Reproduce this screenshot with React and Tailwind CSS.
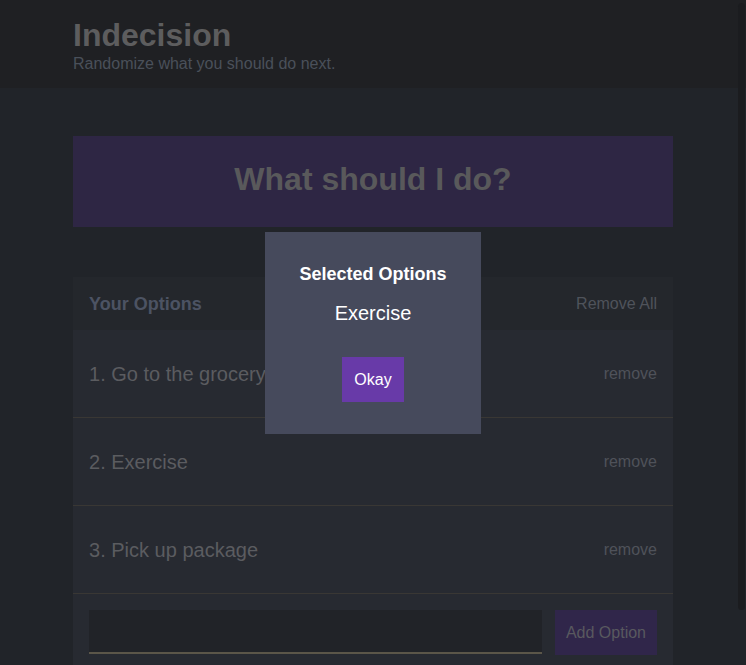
const OPTIONS = ['Go to the grocery store', 'Exercise', 'Pick up package'];

function Header() {
  return (
    <header className="bg-[#1f2023] pt-4 pb-[15px]">
      <div className="w-[600px] mx-auto">
        <h1 className="text-[32px] leading-[38px] font-bold text-[#5d5d5e]">Indecision</h1>
        <h2 className="text-base leading-[19px] text-[#4a505a]">Randomize what you should do next.</h2>
      </div>
    </header>
  );
}

function OptionRow({ index, text }) {
  return (
    <div className="h-[88px] flex items-center justify-between px-4 border-b border-[#393734]">
      <p className="text-xl text-[#5b5c60] whitespace-nowrap">
        {index}. {text}
      </p>
      <button className="text-base text-[#4f525a]">remove</button>
    </div>
  );
}

function SelectedModal() {
  return (
    <div className="fixed inset-0 flex items-center justify-center">
      <div className="w-[216px] h-[202px] bg-[#464a5c] pt-8 flex flex-col items-center text-white">
        <h3 className="text-lg leading-[21px] font-bold">Selected Options</h3>
        <p className="mt-[17px] text-xl leading-[23px]">Exercise</p>
        <button className="mt-8 bg-[#683aa8] px-3 py-[13px] text-base leading-[19px] text-white">Okay</button>
      </div>
    </div>
  );
}

export default function App() {
  return (
    <div
      className="h-screen overflow-hidden bg-[#212429]"
      style={{ fontFamily: '"Liberation Sans", Arial, sans-serif' }}
    >
      <Header />
      <main className="w-[600px] mx-auto">
        <div className="mt-12 bg-[#2e2644] pt-6 pb-[29px] text-center">
          <button className="text-[32px] leading-[38px] font-bold text-[#59595b]">What should I do?</button>
        </div>

        <div className="mt-[50px] bg-[#272a31]">
          <div className="h-[53px] flex items-center justify-between px-4 bg-[#24272c]">
            <h3 className="text-lg font-bold text-[#4c5363]">Your Options</h3>
            <button className="text-base text-[#4f535b]">Remove All</button>
          </div>
          {OPTIONS.map((opt, i) => (
            <OptionRow key={opt} index={i + 1} text={opt} />
          ))}
          <form className="flex gap-[13px] px-4 pt-4 pb-6">
            <input className="flex-1 h-11 bg-[#212328] border-b-2 border-[#5b5649] outline-none" />
            <button type="button" className="h-[45px] px-[11px] bg-[#30264a] text-base text-[#59595f]">Add Option</button>
          </form>
        </div>
      </main>

      {/* scrollbar thumb behind the overlay */}
      <div className="fixed right-px top-[3px] w-[7px] h-[607px] rounded bg-[#1b1c1f]" />

      <SelectedModal />
    </div>
  );
}
